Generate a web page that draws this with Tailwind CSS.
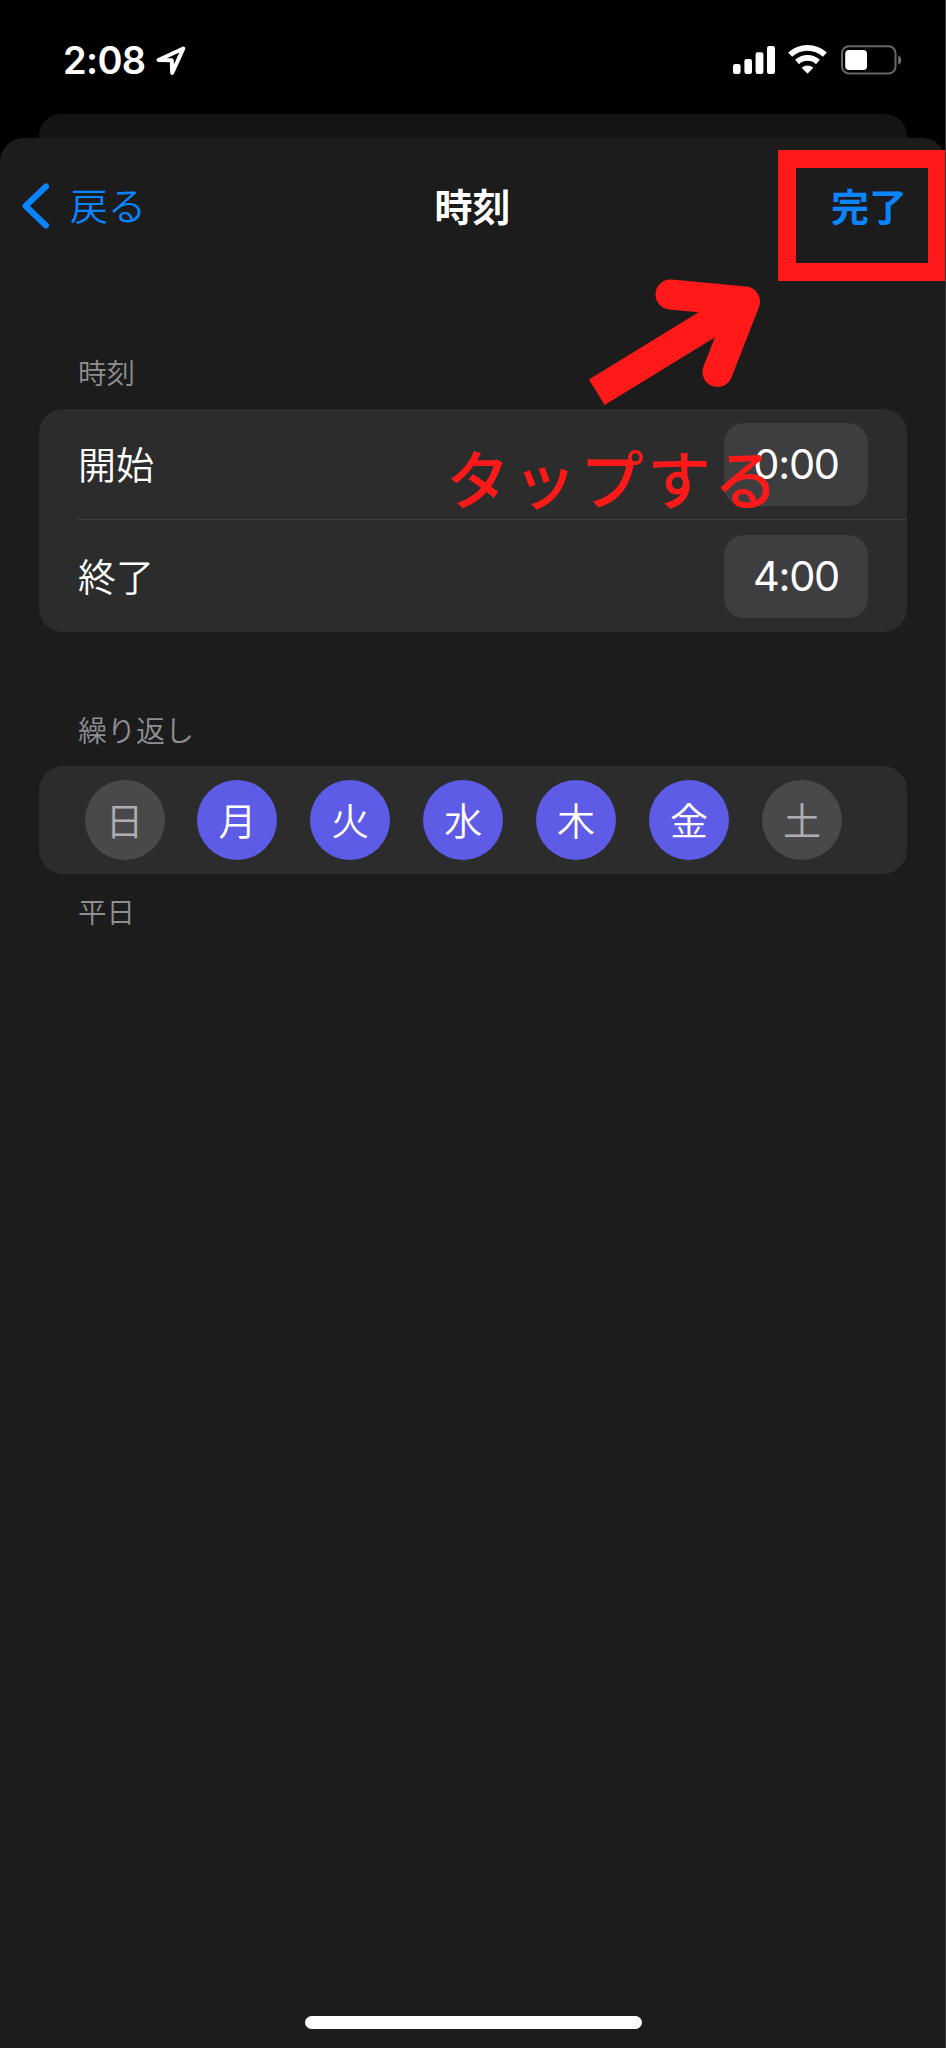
<!DOCTYPE html>
<html lang="ja">
<head>
<meta charset="utf-8">
<title>時刻</title>
<script src="https://cdn.jsdelivr.net/npm/@tailwindcss/browser@4"></script>
</head>
<body class="bg-black">
<div class="relative flex h-[2048px] w-[946px] flex-col overflow-hidden bg-black font-['Noto_Sans_CJK_JP',sans-serif] text-white">
  <header class="flex h-[114px] shrink-0 items-start justify-between pl-[63px] pr-[44px] pt-[40px]">
    <div class="flex items-center">
      <span class="w-[92px] whitespace-nowrap font-['Inter',sans-serif] text-[38px] font-semibold leading-[40px] tracking-[-0.7px]">2:08</span>
      <svg class="-mt-px h-[32px] w-[32px]" viewBox="0 0 32 32" fill="none" stroke="#fff" stroke-width="4" stroke-linejoin="round"><path d="M28.3 4.5 3.5 16 16.8 16.2 17.2 29Z"/></svg>
    </div>
    <svg class="h-[40px] w-[169px]" viewBox="733 40 169 40">
      <g fill="#fff">
        <rect x="733" y="64" width="7.6" height="10" rx="2.2"/><rect x="744.4" y="59" width="7.6" height="15" rx="2.2"/><rect x="755.6" y="52.3" width="7.8" height="21.7" rx="2.2"/><rect x="767" y="46" width="8" height="28" rx="2.2"/>
        <path d="M802.600 67.800A7.600 7.600 0 0 1 812.400 67.800L807.500 72.800Z" stroke="#fff" stroke-width="1.200" stroke-linejoin="round"/>
      </g>
      <g fill="none" stroke="#fff" stroke-width="5.800"><path d="M790.100 54.600A25.700 25.700 0 0 1 824.900 54.600"/><path d="M797.100 62A15.400 15.400 0 0 1 817.900 62"/></g>
      <rect x="842" y="46.200" width="53.500" height="27.400" rx="7" fill="none" stroke="#666" stroke-width="2"/>
      <rect x="845.200" y="50" width="21.800" height="20" rx="3.800" fill="#fff"/>
      <path d="M898.300 55.200q3 1.700 3 4.800t-3 4.800Z" fill="#777"/>
    </svg>
  </header>
  <div class="mx-[39px] h-[24px] shrink-0 rounded-t-[22px] bg-[#141414]"></div>
  <main class="flex flex-1 flex-col rounded-t-[24px] bg-[#1c1c1c]">
    <nav class="grid h-[136px] grid-cols-3 items-center pl-[22px] pr-[39px] text-[38px] leading-[56px]">
      <div class="flex items-center text-[#0a84ff]">
        <svg class="h-[46px] w-[28px]" viewBox="0 0 28 46" fill="none" stroke="currentColor" stroke-width="6" stroke-linecap="round" stroke-linejoin="round"><path d="M24 3.500 3.500 23 24 42.500"/></svg>
        <span class="-mt-[5px] ml-[20px] font-[350]">戻る</span>
      </div>
      <h1 class="-mt-[3px] translate-x-[8px] text-center font-bold">時刻</h1>
      <span class="-mt-[3px] text-right font-bold text-[#0a84ff]">完了</span>
    </nav>
    <section class="mx-[39px] mt-[76px] flex flex-col">
      <h2 class="h-[59px] pl-[39px] text-[28.500px] font-[350] leading-[43px] text-[#8e8e93]">時刻</h2>
      <div class="flex h-[223px] flex-col rounded-[24px] bg-[#2c2c2c] pl-[38px] text-[38px] font-[350]">
        <div class="flex h-[111px] items-center justify-between border-b border-[#3f3f41] pr-[39px]">
          <span class="-mt-[3px] pl-px">開始</span>
          <span class="flex h-[83px] w-[144px] items-center justify-center rounded-[20px] bg-[#3e3e40] pt-px font-['Inter',sans-serif] text-[41.500px] font-normal tracking-[-1.300px]">0:00</span>
        </div>
        <div class="flex h-[112px] items-center justify-between pr-[39px]">
          <span class="-mt-[3px] pl-px">終了</span>
          <span class="flex h-[83px] w-[144px] items-center justify-center rounded-[20px] bg-[#3e3e40] pt-px font-['Inter',sans-serif] text-[41.500px] font-normal tracking-[-1.300px]">4:00</span>
        </div>
      </div>
    </section>
    <section class="mx-[39px] mt-[77px] flex flex-col">
      <h2 class="h-[57px] pl-[39px] text-[29px] font-[350] leading-[40px] text-[#8e8e93]">繰り返し</h2>
      <div class="flex h-[108px] items-center justify-between rounded-[24px] bg-[#2c2c2c] pl-[45.500px] pr-[65px] text-[38px] font-[350]">
        <span class="flex size-[80px] items-center justify-center rounded-full bg-[#49494b] pb-[3px] text-[#aeaeb4]">日</span>
        <span class="flex size-[80px] items-center justify-center rounded-full bg-[#5e5ce6] pb-[3px]">月</span>
        <span class="flex size-[80px] items-center justify-center rounded-full bg-[#5e5ce6] pb-[3px]">火</span>
        <span class="flex size-[80px] items-center justify-center rounded-full bg-[#5e5ce6] pb-[3px]">水</span>
        <span class="flex size-[80px] items-center justify-center rounded-full bg-[#5e5ce6] pb-[3px]">木</span>
        <span class="flex size-[80px] items-center justify-center rounded-full bg-[#5e5ce6] pb-[3px]">金</span>
        <span class="flex size-[80px] items-center justify-center rounded-full bg-[#49494b] pb-[3px] text-[#aeaeb4]">土</span>
      </div>
      <p class="mt-[16px] pl-[39px] text-[28.500px] font-[350] leading-[42px] text-[#8e8e93]">平日</p>
    </section>
    <div class="mb-[19px] ml-[305px] mt-auto h-[13px] w-[337px] rounded-full bg-white"></div>
  </main>

  <!-- Tap hint laid over the sheet -->
  <div class="absolute left-[777.500px] top-[150px] h-[131px] w-[168.500px] border-[18px] border-[#ff1919]"></div>
  <svg class="absolute left-[580px] top-[270px] h-[140px] w-[190px]" viewBox="580 270 190 140" fill="none" stroke="#ff1919" stroke-width="30"><path d="M596.800 392.300 744.700 301.500"/><path d="M670.500 294.500 745 301.500 717.500 372" stroke-linecap="round" stroke-linejoin="round"/></svg>
  <p class="absolute left-[446px] top-[428px] whitespace-nowrap text-[64px] font-medium leading-[96px] tracking-[3px] text-[#ff1919]">タップする</p>
  <div class="absolute right-0 top-0 h-full w-px bg-[#3a3a3a]"></div>
</div>
</body>
</html>
